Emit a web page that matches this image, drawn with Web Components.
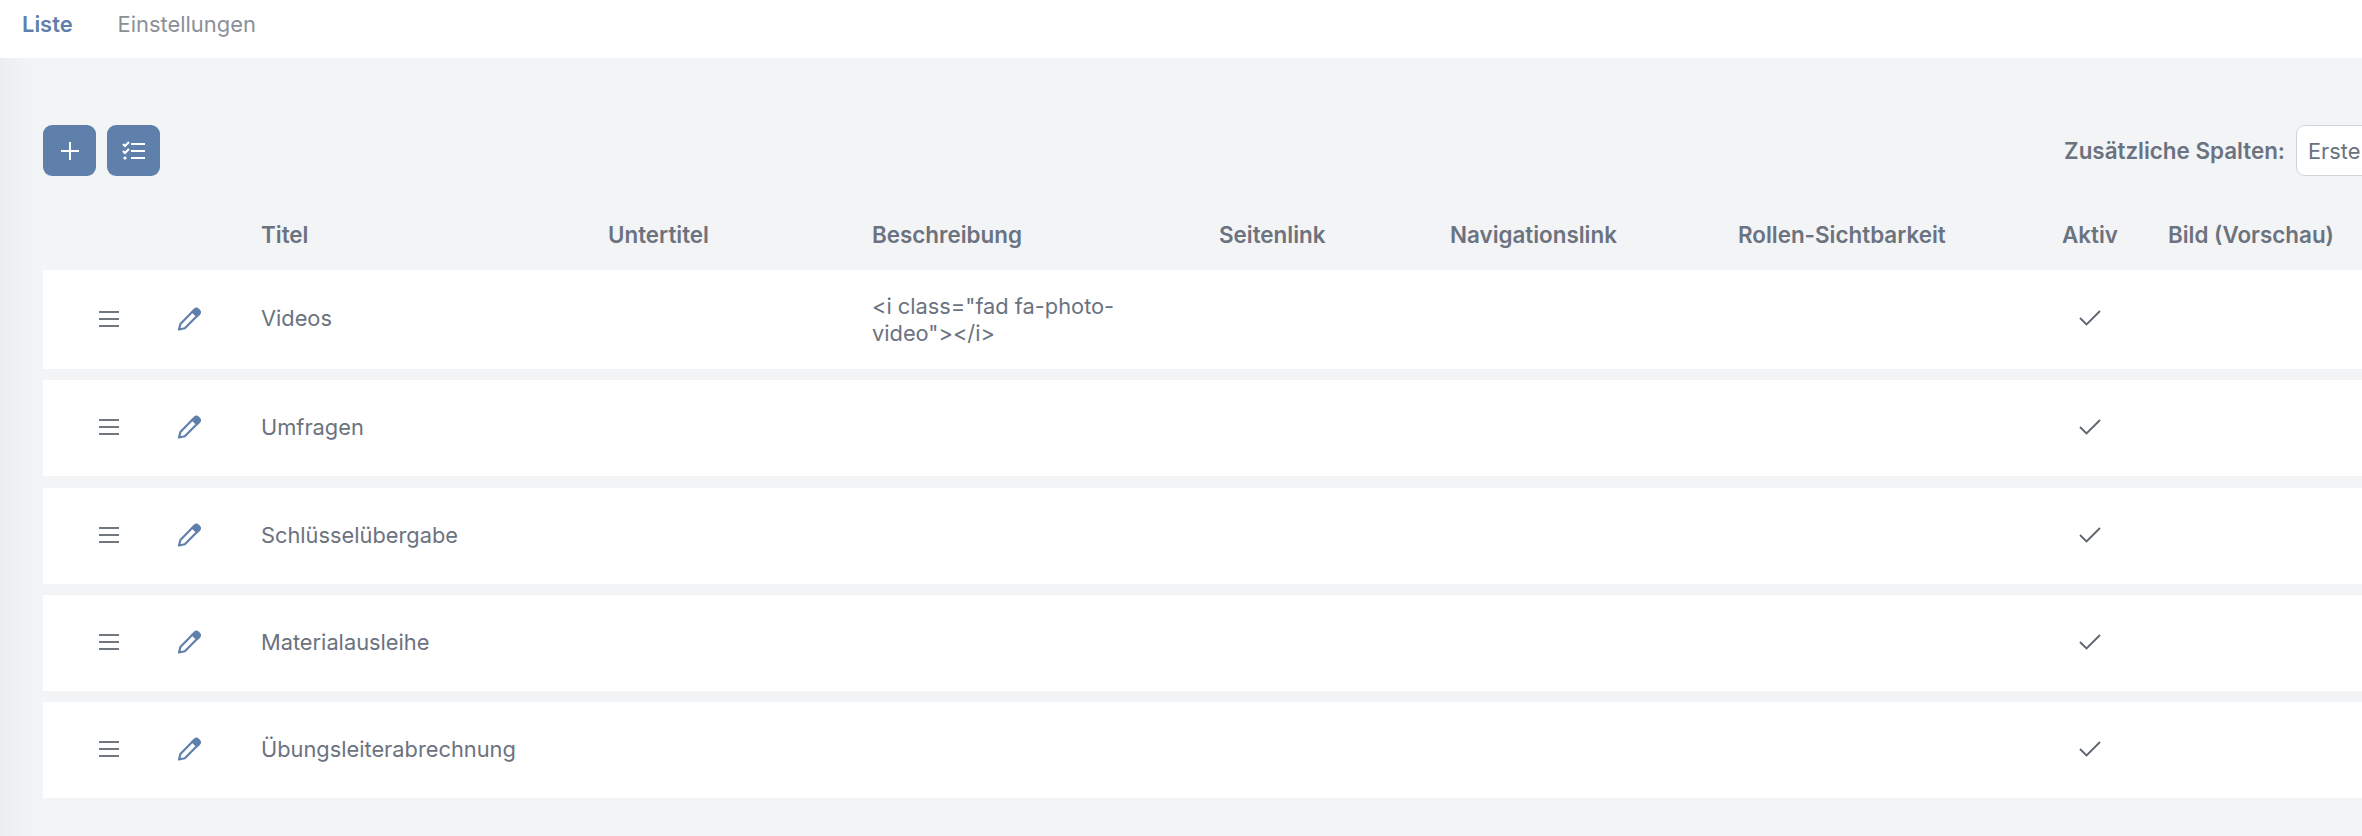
<!DOCTYPE html>
<html lang="de">
<head>
<meta charset="utf-8">
<title>Liste</title>
<style>
    html, body {
        margin: 0;
        width: 2362px;
        height: 836px;
        overflow: hidden;
        background: #f3f4f6;
        font-family: Inter, "Liberation Sans", sans-serif;
        color: #6b7280;
        --cols: 218px 347px 264px 347px 231px 288px 324px 106px 1fr;
    }
</style>
</head>
<body>
<tab-bar>
    <tab-item active>Liste</tab-item>
    <tab-item>Einstellungen</tab-item>
</tab-bar>
<list-page>
    <list-toolbar label="Zusätzliche Spalten:" value="Erste">
        <icon-button icon="plus"></icon-button>
        <icon-button icon="tasks"></icon-button>
    </list-toolbar>
    <list-header></list-header>
    <list-row aktiv tall>
        <span slot="titel">Videos</span>
        <span slot="beschreibung">&lt;i class="fad fa-photo-video"&gt;&lt;/i&gt;</span>
    </list-row>
    <list-row aktiv class="wide-gap"><span slot="titel">Umfragen</span></list-row>
    <list-row aktiv><span slot="titel">Schlüsselübergabe</span></list-row>
    <list-row aktiv><span slot="titel">Materialausleihe</span></list-row>
    <list-row aktiv><span slot="titel">Übungsleiterabrechnung</span></list-row>
</list-page>

<script>
const ICONS = {
    plus: `<svg width="20" height="20" viewBox="0 0 20 20" fill="none" stroke="#fff" stroke-width="2"><path d="M10 1v18M1 10h18"/></svg>`,
    tasks: `<svg width="24" height="20" viewBox="0 0 24 20" fill="none" stroke="#fff" stroke-width="2">
        <path d="M1 3l2 2 4-4M1 10l2 2 4-4" stroke-width="2.2"/>
        <circle cx="3" cy="17" r="1.6" fill="#fff" stroke="none"/>
        <path d="M9 3h14M9 10h14M9 17h14"/></svg>`,
    bars: `<svg width="20" height="18" viewBox="0 0 20 18" fill="none" stroke="#71777f" stroke-width="2.2"><path d="M0 2h20M0 9h20M0 16h20"/></svg>`,
    pencil: `<svg width="24" height="24" viewBox="0 0 24 24" fill="none" stroke="#5f80ab" stroke-width="2.2" stroke-linejoin="round">
        <path d="M2 22.5l1.4-5.6L15.6 4.6l4.4 4.4L7.8 21.2z"/>
        <path d="M15.6 4.6l2-2a2.6 2.6 0 0 1 3.6 0l.9.9a2.6 2.6 0 0 1 0 3.6l-2.1 2z" fill="#5f80ab"/></svg>`,
    check: `<svg width="22" height="16" viewBox="0 0 22 16" fill="none" stroke="#5f6670" stroke-width="1.9"><path d="M1 8l6.5 6.5L21 1"/></svg>`
};

class TabBar extends HTMLElement {
    connectedCallback() {
        this.attachShadow({ mode: 'open' }).innerHTML = `
            <style>
                :host {
                    display: flex;
                    align-items: center;
                    gap: 45px;
                    height: 58px;
                    padding: 0 0 10px 22px;
                    box-sizing: border-box;
                    background: #fff;
                }
            </style>
            <slot></slot>
        `;
    }
}

class TabItem extends HTMLElement {
    connectedCallback() {
        this.attachShadow({ mode: 'open' }).innerHTML = `
            <style>
                :host {
                    display: block;
                    font-size: 21.9px;
                    color: #8b9098;
                }
                :host([active]) {
                    color: #5f80ab;
                    font-weight: 600;
                }
            </style>
            <slot></slot>
        `;
    }
}

class ListPage extends HTMLElement {
    connectedCallback() {
        this.attachShadow({ mode: 'open' }).innerHTML = `
            <style>
                :host {
                    display: block;
                    box-sizing: border-box;
                    width: 2500px;
                    height: 778px;
                    padding: 67px 0 0 43px;
                    background: linear-gradient(90deg, #ebedf0 0, #f1f2f5 22px, #f3f4f6 42px);
                }
            </style>
            <slot></slot>
        `;
    }
}

class ListToolbar extends HTMLElement {
    connectedCallback() {
        this.attachShadow({ mode: 'open' }).innerHTML = `
            <style>
                :host {
                    display: flex;
                    justify-content: space-between;
                    align-items: center;
                    height: 51px;
                }
                .left { display: flex; gap: 11px; }
                .right { display: flex; align-items: center; gap: 11px; }
                .label { font-size: 22.4px; font-weight: 600; }
                .select {
                    box-sizing: border-box;
                    width: 204px;
                    height: 51px;
                    padding: 0 11px;
                    display: flex;
                    align-items: center;
                    font-size: 21.8px;
                    background: #fff;
                    border: 1px solid #d1d5db;
                    border-radius: 9px;
                }
            </style>
            <div class="left"><slot></slot></div>
            <div class="right">
                <span class="label">${this.getAttribute('label')}</span>
                <div class="select">${this.getAttribute('value')}</div>
            </div>
        `;
    }
}

class IconButton extends HTMLElement {
    connectedCallback() {
        this.attachShadow({ mode: 'open' }).innerHTML = `
            <style>
                :host {
                    display: flex;
                    align-items: center;
                    justify-content: center;
                    width: 53px;
                    height: 51px;
                    background: #5f80ab;
                    border-radius: 9px;
                }
                svg { display: block; }
            </style>
            ${ICONS[this.getAttribute('icon')]}
        `;
    }
}

class ListHeader extends HTMLElement {
    connectedCallback() {
        const cols = ['', 'Titel', 'Untertitel', 'Beschreibung', 'Seitenlink', 'Navigationslink', 'Rollen-Sichtbarkeit', 'Aktiv', 'Bild (Vorschau)'];
        this.attachShadow({ mode: 'open' }).innerHTML = `
            <style>
                :host {
                    display: grid;
                    grid-template-columns: var(--cols);
                    align-items: center;
                    box-sizing: border-box;
                    height: 94px;
                    padding-top: 23px;
                    font-size: 22.4px;
                    font-weight: 600;
                }
            </style>
            ${cols.map(c => `<div>${c}</div>`).join('')}
        `;
    }
}

class ListRow extends HTMLElement {
    connectedCallback() {
        this.attachShadow({ mode: 'open' }).innerHTML = `
            <style>
                :host {
                    display: grid;
                    grid-template-columns: var(--cols);
                    align-items: center;
                    min-height: 96px;
                    margin-bottom: 11px;
                    background: #fff;
                    font-size: 21.8px;
                    line-height: 27px;
                }
                :host([tall]) { min-height: 99px; }
                :host(.wide-gap) { margin-bottom: 12px; }
                .handles {
                    display: flex;
                    align-items: center;
                    gap: 58px;
                    padding: 0 0 2px 56px;
                }
                .title { padding-bottom: 2px; }
                .desc { padding: 1px 80px 0 0; }
                .check { padding: 0 0 3px 17px; display: flex; }
                svg { display: block; }
            </style>
            <div class="handles">${ICONS.bars}${ICONS.pencil}</div>
            <div class="title"><slot name="titel"></slot></div>
            <div></div>
            <div class="desc"><slot name="beschreibung"></slot></div>
            <div></div>
            <div></div>
            <div></div>
            <div class="check">${this.hasAttribute('aktiv') ? ICONS.check : ''}</div>
            <div></div>
        `;
    }
}

customElements.define('tab-bar', TabBar);
customElements.define('tab-item', TabItem);
customElements.define('list-page', ListPage);
customElements.define('list-toolbar', ListToolbar);
customElements.define('icon-button', IconButton);
customElements.define('list-header', ListHeader);
customElements.define('list-row', ListRow);
</script>
</body>
</html>
